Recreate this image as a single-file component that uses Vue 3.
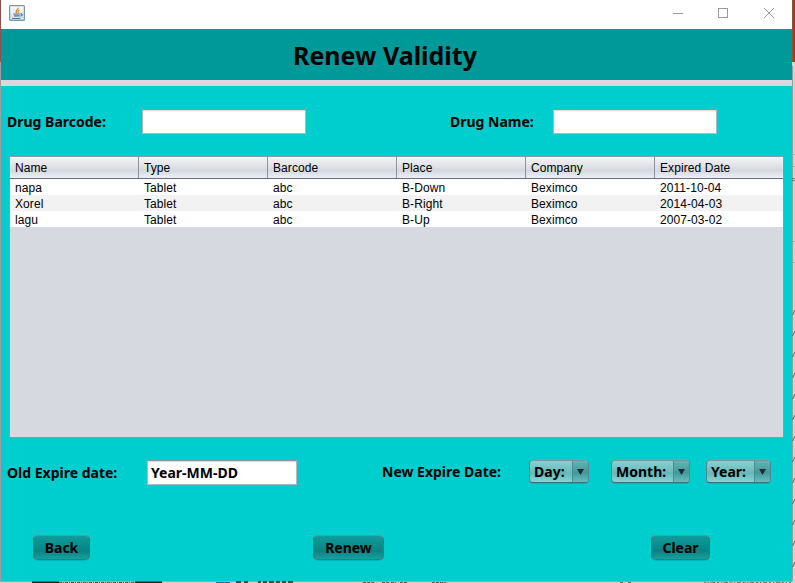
<script setup>
const columns = ['Name', 'Type', 'Barcode', 'Place', 'Company', 'Expired Date']
const rows = [
  ['napa', 'Tablet', 'abc', 'B-Down', 'Beximco', '2011-10-04'],
  ['Xorel', 'Tablet', 'abc', 'B-Right', 'Beximco', '2014-04-03'],
  ['lagu', 'Tablet', 'abc', 'B-Up', 'Beximco', '2007-03-02'],
]
const combos = [
  { label: 'Day:', cls: 'day' },
  { label: 'Month:', cls: 'month' },
  { label: 'Year:', cls: 'year' },
]
const marks = [313, 334, 355, 376, 397, 418, 439, 460, 481, 502, 523, 544, 565]
</script>

<template>
  <div class="desktop">
    <div class="edge-left"></div>
    <main class="window">
      <header class="titlebar">
        <svg class="java" width="16" height="16" viewBox="0 0 16 16">
          <defs>
            <linearGradient id="jg" x1="0" y1="0" x2="0" y2="1">
              <stop offset="0" stop-color="#fafcfd" />
              <stop offset="1" stop-color="#d3dfe8" />
            </linearGradient>
          </defs>
          <rect x=".6" y=".6" width="14.8" height="14.8" rx="1" fill="url(#jg)" stroke="#7b93a5" stroke-width="1.2" />
          <path d="M9.2 2.600C9.800 4.600 5.400 5.200 7.700 8.200M10.600 5C8.800 5.700 8.600 6.500 9.500 7.800" fill="none" stroke="#ee8a1d" stroke-width="1.300" />
          <path d="M4.300 9h6.700M5 10.900h5.600M3 13.500h8.500M11.400 8.900c2.600-.5 2.400 2-.1 2.300" fill="none" stroke="#467398" stroke-width="1.1" />
        </svg>
        <svg class="controls" width="102" height="12" viewBox="0 0 102 12" fill="none" stroke="#999">
          <path d="M0 5.500h10" />
          <rect x="45.500" y=".5" width="9" height="9" />
          <path d="M91 0l10 10M101 0l-10 10" />
        </svg>
      </header>
      <div class="heading"><h1>Renew Validity</h1></div>
      <section class="panel">
        <div class="search">
          <label class="l-barcode"><span>Drug Barcode:</span></label>
          <div class="field"></div>
          <label class="l-name"><span>Drug Name:</span></label>
          <div class="field"></div>
        </div>
        <div class="table">
          <div class="row head">
            <div v-for="c in columns" :key="c" class="cell">{{ c }}</div>
          </div>
          <div v-for="(r, i) in rows" :key="i" class="row data">
            <div v-for="(v, j) in r" :key="j" class="cell">{{ v }}</div>
          </div>
        </div>
        <div class="dates">
          <label class="l-old"><span>Old Expire date:</span></label>
          <div class="field old"><span>Year-MM-DD</span></div>
          <label class="l-new"><span>New Expire Date:</span></label>
          <div v-for="c in combos" :key="c.cls" class="combo" :class="c.cls">
            <span class="combo-label">{{ c.label }}</span>
            <span class="arrow">
              <svg width="7" height="6" viewBox="0 0 7 6"><path d="M0 0h7L3.500 6z" fill="#202b2c" /></svg>
            </span>
          </div>
        </div>
        <div class="actions">
          <button class="back">Back</button>
          <button class="renew">Renew</button>
          <button class="clear">Clear</button>
        </div>
      </section>
    </main>
    <svg class="edge-right" width="3" height="583" viewBox="0 0 3 583">
      <rect width="3" height="62" fill="#a63b20" />
      <rect width="1" height="62" fill="#8e5547" />
      <rect y="62" width="3" height="521" fill="#d2d2d2" />
      <rect y="66" width="1" height="515" fill="#a19b9b" />
      <path d="M0 154.500h3M0 166.500h3M0 241.500h3M0 262.500h3" stroke="#aaa" />
      <path d="M0 178.500h3M0 180.500h3" stroke="#747479" />
      <path v-for="y in marks" :key="y" :d="`M0.500 ${y + 2}L3 ${y - 3}`" stroke="#665d72" />
    </svg>
    <svg class="edge-bottom" width="795" height="2" viewBox="0 0 795 2">
      <path d="M0 1.500h792" stroke="#c8cfcf" />
      <path d="M0 .5h792" stroke="#9caaaa" />
      <path d="M32 1.500h27M135 1.500h27" stroke="#14292b" stroke-width="2" />
      <path d="M59 1.500h76" stroke="#475b5c" stroke-dasharray="3 1 1 1" />
      <path d="M216 1.500h14" stroke="#197b94" />
      <path d="M236 1h5M244 1h4M258 1h3M263 1h4M269 1h5M276 1h4M282 1h4M288 1h5" stroke="#414d4e" stroke-width="2" />
      <path d="M363 1.500h12M382 1.500h7M391 1.500h5M400 1.500h7M432 1.500h14" stroke="#555c5d" stroke-dasharray="3 1" />
      <path d="M620 1.500h3M628 1.500h3" stroke="#398347" />
      <path d="M704 1.500h87" stroke="#68787a" stroke-dasharray="2 2 1 2 4 2" />
    </svg>
  </div>
</template>

<style>
body { overflow: hidden; }
</style>

<style scoped>
* { box-sizing: border-box; }
.desktop { position: relative; display: flex; width: 795px; height: 583px; overflow: hidden; background: #c8cfcf; font-family: "Noto Sans", sans-serif; color: #000; }
.edge-left { width: 1px; height: 583px; background: linear-gradient(#925044 0 62px, #a29d9d 62px); }
.window { width: 791px; height: 581px; display: flex; flex-direction: column; }
.edge-bottom { position: absolute; left: 0; bottom: 0; }
.titlebar { height: 29px; background: #fff; display: flex; justify-content: space-between; align-items: flex-start; padding: 5px 17px 0 8px; }
.controls { margin-top: 3px; }
.heading { height: 57px; background: #009999; border-bottom: 6px solid #d6d9df; padding-left: 292px; display: flex; align-items: center; }
h1 { margin: 0; font-size: 25px; line-height: 30px; font-weight: bold; white-space: nowrap; }
.panel { flex: 1; background: #00cdcd; display: flex; flex-direction: column; }
.search { display: flex; align-items: center; height: 70px; padding: 1px 0 0 6px; }
label { font-size: 14px; font-weight: bold; line-height: 18px; white-space: nowrap; flex: none; }
.l-barcode { width: 135px; }
.l-name { width: 103px; margin-left: 144px; }
.field { width: 164px; height: 25px; flex: none; background: linear-gradient(#dedede 0 1px, #f5f5f5 1px 2px, #fff 2px); border: 1px solid #b4b7b7; border-top-color: #8e9292; }
.table { margin-left: 8px; width: 775px; height: 282px; flex: none; border: 1px solid #9297a1; background: #d6d9df; font-family: "Liberation Sans", sans-serif; font-size: 12px; }
.row { display: grid; grid-template-columns: repeat(6, 129px); width: 773px; overflow: hidden; }
.cell { padding-left: 5px; white-space: nowrap; letter-spacing: .08px; }
.head { height: 22px; line-height: 22px; border-bottom: 1px solid #686d77; background: linear-gradient(#f5f5f7, #dfe1e6 45%, #d5d8df 65%, #edf0f8); }
.head .cell { border-right: 1px solid #8d929c; }
.data { height: 16px; line-height: 18px; background: #fff; }
.data:nth-child(odd) { background: #f2f2f2; }
.dates { display: flex; align-items: flex-start; height: 97px; padding: 22px 0 0 6px; }
.l-old { width: 140px; padding-top: 4px; }
.l-new { width: 147px; margin-left: 85px; padding-top: 3px; }
.old { width: 150px; padding-left: 3px; line-height: 24px; font-size: 14px; font-weight: bold; }
.combo { display: flex; height: 23px; border: 1px solid #54888b; border-top-color: #789798; border-bottom-color: #416d70; border-radius: 4px; background: linear-gradient(#88d1d1, #68b8b9 60%, #84d7d7); font-size: 14px; font-weight: bold; line-height: 22px; overflow: hidden; flex: none; box-shadow: 0 1px 0 #00b8b8; }
.combo-label { flex: 1; padding-left: 4px; white-space: nowrap; }
.arrow { width: 16px; display: flex; align-items: center; justify-content: center; border-left: 1px solid #458f92; background: linear-gradient(#65b4b5, #41999b 55%, #67bdbe); }
.day { width: 60px; }
.month { width: 79px; margin-left: 22px; }
.year { width: 65px; margin-left: 16px; }
.actions { display: flex; padding-left: 32px; }
button { height: 25px; padding: 0; border: 1px solid #586b6d; border-top-color: #788d8e; border-radius: 5px; background: linear-gradient(#109c9c, #078586 60%, #0b8283 65%, #12a3a3); font: bold 14px "Noto Sans", sans-serif; color: #000; line-height: 23px; box-shadow: 0 1px 0 #00b7b7; }
.back { width: 57px; }
.renew { width: 71px; margin-left: 223px; }
.clear { width: 59px; margin-left: 267px; }
</style>
